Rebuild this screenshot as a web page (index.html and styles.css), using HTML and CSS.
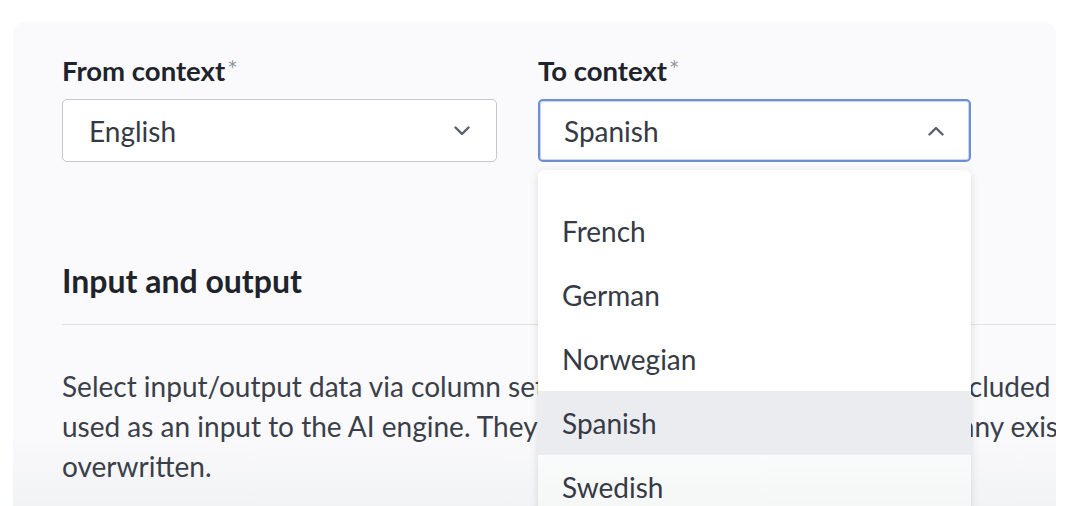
FILE: index.html
```html
<!DOCTYPE html>
<html lang="en">
<head>
<meta charset="utf-8">
<title>Translate settings</title>
<link rel="stylesheet" href="styles.css">
</head>
<body>
<div class="page">
  <section class="card">
    <div class="fields">
      <div class="field">
        <div class="label">From context<span class="req">*</span></div>
        <div class="select">
          <span class="value">English</span>
          <svg class="chev" width="16" height="10" viewBox="0 0 16 10"><path d="M1.5 1.5 L8 8 L14.5 1.5" fill="none" stroke="#5b606b" stroke-width="2.4" stroke-linecap="round" stroke-linejoin="round"/></svg>
        </div>
      </div>
      <div class="field field-open">
        <div class="label">To context<span class="req">*</span></div>
        <div class="select select-focus">
          <span class="value">Spanish</span>
          <svg class="chev" width="16" height="10" viewBox="0 0 16 10"><path d="M1.5 8.5 L8 2 L14.5 8.5" fill="none" stroke="#5b606b" stroke-width="2.4" stroke-linecap="round" stroke-linejoin="round"/></svg>
        </div>
        <ul class="menu">
          <li class="opt">French</li>
          <li class="opt">German</li>
          <li class="opt">Norwegian</li>
          <li class="opt opt-active">Spanish</li>
          <li class="opt opt-last">Swedish</li>
        </ul>
      </div>
    </div>

    <h2 class="heading">Input and output</h2>
    <hr class="divider">
    <p class="desc">Select input/output data via column settings. Columns used as input are included<br>used as an input to the AI engine. They are translated and sent to output, any existing values will be<br>overwritten.</p>
  </section>
</div>
</body>
</html>
```

FILE: styles.css
```css
* { box-sizing: border-box; }

html, body {
  margin: 0;
  padding: 0;
  background: #ffffff;
  overflow: hidden;
}

body {
  font-family: "Lato", "Liberation Sans", sans-serif;
  color: #353a45;
}

.page {
  padding: 22px 17px 0 13px;
}

.card {
  position: relative;
  height: 484px;
  overflow: hidden;
  background: linear-gradient(to bottom, #fafafc 0, #fafafc 410px, #f2f3f5 484px);
  border-radius: 12px 12px 0 0;
  padding: 29px 0 0 49px;
}

.fields {
  display: grid;
  grid-template-columns: 435px 433px;
  column-gap: 41px;
}

.field {
  position: relative;
}

.label {
  font-size: 27.5px;
  line-height: 32px;
  font-weight: 700;
  color: #1f232b;
  margin-bottom: 12px;
}

.req {
  font-family: "DejaVu Sans", sans-serif;
  font-size: 17px;
  font-weight: 400;
  color: #8b909a;
  vertical-align: 8px;
  margin-left: 3px;
}

.select {
  height: 63px;
  background: #ffffff;
  border: 1px solid #c4c7cf;
  border-radius: 5px;
  padding: 0 26px 0 26px;
  display: flex;
  align-items: center;
  justify-content: space-between;
  font-size: 28px;
  color: #353a45;
}

.select-focus {
  border: 2px solid #6b8fd1;
  box-shadow: inset 0 0 0 1px #c9d6ef;
  padding: 0 25px 0 24px;
}

.chev {
  display: block;
}

.menu {
  position: absolute;
  z-index: 2;
  top: 119px;
  left: 0;
  width: 433px;
  margin: 0;
  padding: 29px 0 0 0;
  list-style: none;
  background: #ffffff;
  border-radius: 6px;
  box-shadow: 0 2px 8px rgba(20, 25, 40, 0.13);
}

.opt {
  height: 64px;
  display: flex;
  align-items: center;
  padding-left: 24px;
  font-size: 28px;
  color: #353a45;
}

.opt-active {
  background: #ebecf0;
}

.opt-last {
  background: linear-gradient(to bottom, #fafbfb, #f4f6f6);
}

.heading {
  margin: 99px 0 0 0;
  font-size: 32px;
  line-height: 40px;
  font-weight: 700;
  color: #1f232b;
}

.divider {
  margin: 23px 0 0 0;
  border: 0;
  height: 1px;
  background: #e0e2e6;
}

.desc {
  margin: 41px 0 0 0;
  font-size: 28px;
  line-height: 40px;
  white-space: nowrap;
  color: #3a3f4a;
}
```
